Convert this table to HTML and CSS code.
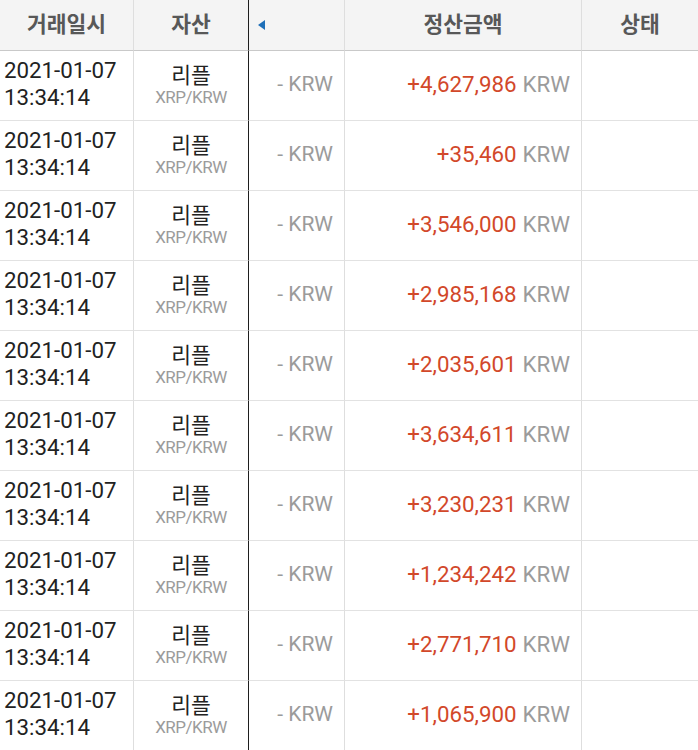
FILE: index.html
```html
<!DOCTYPE html>
<html lang="ko">
<head>
<meta charset="utf-8">
<link rel="stylesheet" href="styles.css">
</head>
<body>
<div class="table">
  <div class="th c1">거래일시</div>
  <div class="th c2">자산</div>
  <div class="th c3"><svg class="tri" width="7" height="10" viewBox="0 0 7 10"><path d="M0 5 L7 0 L7 10 Z" fill="#1f6fb8"/></svg></div>
  <div class="th c4">정산금액</div>
  <div class="th c5">상태</div>

  <div class="td c1"><span>2021-01-07</span><span>13:34:14</span></div>
  <div class="td c2"><span class="coin">리플</span><span class="pair">XRP/KRW</span></div>
  <div class="td c3"><span class="dash">- KRW</span></div>
  <div class="td c4"><span class="amt">+4,627,986</span><span class="cur">KRW</span></div>
  <div class="td c5"></div>

  <div class="td c1"><span>2021-01-07</span><span>13:34:14</span></div>
  <div class="td c2"><span class="coin">리플</span><span class="pair">XRP/KRW</span></div>
  <div class="td c3"><span class="dash">- KRW</span></div>
  <div class="td c4"><span class="amt">+35,460</span><span class="cur">KRW</span></div>
  <div class="td c5"></div>

  <div class="td c1"><span>2021-01-07</span><span>13:34:14</span></div>
  <div class="td c2"><span class="coin">리플</span><span class="pair">XRP/KRW</span></div>
  <div class="td c3"><span class="dash">- KRW</span></div>
  <div class="td c4"><span class="amt">+3,546,000</span><span class="cur">KRW</span></div>
  <div class="td c5"></div>

  <div class="td c1"><span>2021-01-07</span><span>13:34:14</span></div>
  <div class="td c2"><span class="coin">리플</span><span class="pair">XRP/KRW</span></div>
  <div class="td c3"><span class="dash">- KRW</span></div>
  <div class="td c4"><span class="amt">+2,985,168</span><span class="cur">KRW</span></div>
  <div class="td c5"></div>

  <div class="td c1"><span>2021-01-07</span><span>13:34:14</span></div>
  <div class="td c2"><span class="coin">리플</span><span class="pair">XRP/KRW</span></div>
  <div class="td c3"><span class="dash">- KRW</span></div>
  <div class="td c4"><span class="amt">+2,035,601</span><span class="cur">KRW</span></div>
  <div class="td c5"></div>

  <div class="td c1"><span>2021-01-07</span><span>13:34:14</span></div>
  <div class="td c2"><span class="coin">리플</span><span class="pair">XRP/KRW</span></div>
  <div class="td c3"><span class="dash">- KRW</span></div>
  <div class="td c4"><span class="amt">+3,634,611</span><span class="cur">KRW</span></div>
  <div class="td c5"></div>

  <div class="td c1"><span>2021-01-07</span><span>13:34:14</span></div>
  <div class="td c2"><span class="coin">리플</span><span class="pair">XRP/KRW</span></div>
  <div class="td c3"><span class="dash">- KRW</span></div>
  <div class="td c4"><span class="amt">+3,230,231</span><span class="cur">KRW</span></div>
  <div class="td c5"></div>

  <div class="td c1"><span>2021-01-07</span><span>13:34:14</span></div>
  <div class="td c2"><span class="coin">리플</span><span class="pair">XRP/KRW</span></div>
  <div class="td c3"><span class="dash">- KRW</span></div>
  <div class="td c4"><span class="amt">+1,234,242</span><span class="cur">KRW</span></div>
  <div class="td c5"></div>

  <div class="td c1"><span>2021-01-07</span><span>13:34:14</span></div>
  <div class="td c2"><span class="coin">리플</span><span class="pair">XRP/KRW</span></div>
  <div class="td c3"><span class="dash">- KRW</span></div>
  <div class="td c4"><span class="amt">+2,771,710</span><span class="cur">KRW</span></div>
  <div class="td c5"></div>

  <div class="td c1"><span>2021-01-07</span><span>13:34:14</span></div>
  <div class="td c2"><span class="coin">리플</span><span class="pair">XRP/KRW</span></div>
  <div class="td c3"><span class="dash">- KRW</span></div>
  <div class="td c4"><span class="amt">+1,065,900</span><span class="cur">KRW</span></div>
  <div class="td c5"></div>
</div>
</body>
</html>
```
FILE: styles.css
```css
html, body {
  margin: 0;
  padding: 0;
  background: #fff;
  overflow: hidden;
}
body {
  font-family: Roboto, "Noto Sans CJK KR", sans-serif;
  color: #222;
}
.table {
  display: grid;
  grid-template-columns: 134px 115px 96px 237px 116px;
}
.th {
  height: 51px;
  padding-bottom: 5px;
  box-sizing: border-box;
  background: #f4f4f4;
  border-bottom: 1px solid #c9c9c9;
  border-right: 1px solid #dedede;
  display: flex;
  align-items: center;
  justify-content: center;
  font-family: "Noto Sans CJK KR", sans-serif;
  font-weight: 700;
  font-size: 21.5px;
  color: #585858;
}
.th.c2, .td.c2 {
  border-right-color: #1e1e1e;
}
.th.c3 {
  justify-content: flex-start;
  padding-left: 9px;
  padding-bottom: 1px;
}
.th.c5, .td.c5 {
  border-right: none;
}
.td {
  height: 70px;
  box-sizing: border-box;
  padding-bottom: 3px;
  border-bottom: 1px solid #e2e2e2;
  border-right: 1px solid #dedede;
  display: flex;
  flex-direction: column;
  justify-content: center;
}
.td.c1 {
  padding-left: 4px;
  font-size: 22.3px;
  line-height: 27px;
  color: #222;
}
.td.c2 {
  align-items: center;
}
.coin {
  font-family: "Noto Sans CJK KR", sans-serif;
  font-size: 21.5px;
  line-height: 26px;
  color: #222;
}
.pair {
  font-size: 17px;
  line-height: 21px;
  color: #9b9b9b;
  letter-spacing: -0.5px;
}
.td.c3 {
  align-items: flex-end;
  padding-right: 11px;
}
.dash {
  font-size: 21px;
  color: #9b9b9b;
}
.td.c4 {
  flex-direction: row;
  align-items: center;
  justify-content: flex-end;
  padding-right: 11px;
  font-size: 22.3px;
}
.amt {
  color: #d2482a;
}
.cur {
  color: #9b9b9b;
  margin-left: 6px;
}
```
